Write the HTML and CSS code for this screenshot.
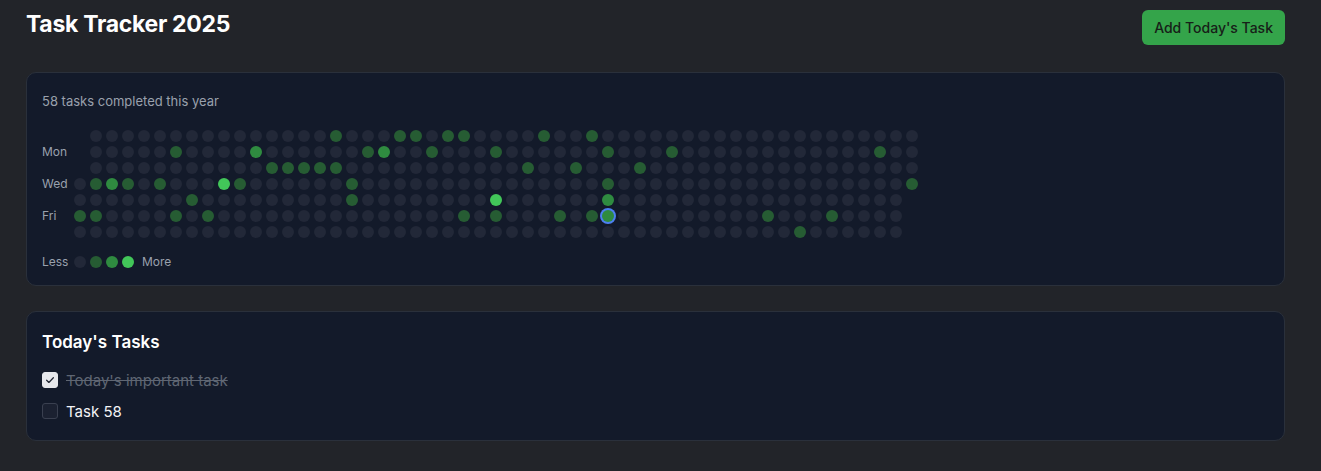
FILE: index.html
```html
<!DOCTYPE html>
<html lang="en">
<head>
    <meta charset="UTF-8">
    <meta name="viewport" content="width=device-width, initial-scale=1.0">
    <title>Task Tracker 2025</title>
    <link rel="stylesheet" href="styles.css">
</head>
<body>
    <div class="tracker">
        <header class="tracker__header">
            <h1 class="tracker__title">Task Tracker 2025</h1>
            <button class="tracker__add-btn">Add Today's Task</button>
        </header>

        <section class="tracker__card tracker__card--heatmap">
            <p class="heatmap__summary">58 tasks completed this year</p>

            <div class="heatmap">
                <div class="heatmap__labels">
                    <span></span>
                    <span>Mon</span>
                    <span></span>
                    <span>Wed</span>
                    <span></span>
                    <span>Fri</span>
                    <span></span>
                </div>
                <div class="heatmap__grid" id="heatmap-grid"></div>
            </div>

            <div class="heatmap__legend">
                <span class="heatmap__legend-text">Less</span>
                <span class="heatmap__dot"></span>
                <span class="heatmap__dot heatmap__dot--l1"></span>
                <span class="heatmap__dot heatmap__dot--l2"></span>
                <span class="heatmap__dot heatmap__dot--l3"></span>
                <span class="heatmap__legend-text heatmap__legend-text--more">More</span>
            </div>
        </section>

        <section class="tracker__card tracker__card--tasks">
            <h2 class="tasks__title">Today's Tasks</h2>
            <ul class="tasks__list">
                <li class="tasks__item tasks__item--done">
                    <span class="tasks__check tasks__check--on">
                        <svg viewBox="0 0 16 16" width="12" height="12"><path d="M3.5 8.3l3 3 6-6.3" fill="none" stroke="#1f2430" stroke-width="1.6" stroke-linecap="round" stroke-linejoin="round"/></svg>
                    </span>
                    <span class="tasks__label">Today's important task</span>
                </li>
                <li class="tasks__item">
                    <span class="tasks__check"></span>
                    <span class="tasks__label">Task 58</span>
                </li>
            </ul>
        </section>
    </div>

    <script>
        // week column, weekday row, level
        const activity = [
            [16,0,1],[20,0,1],[21,0,1],[23,0,1],[24,0,1],[29,0,1],[32,0,1],
            [6,1,1],[11,1,2],[18,1,1],[19,1,2],[22,1,1],[26,1,1],[33,1,1],[37,1,1],[50,1,1],
            [12,2,1],[13,2,1],[14,2,1],[15,2,1],[16,2,1],[28,2,1],[31,2,1],[35,2,1],
            [1,3,1],[2,3,2],[3,3,1],[5,3,1],[9,3,3],[10,3,1],[17,3,1],[33,3,1],[52,3,1],
            [7,4,1],[17,4,1],[26,4,3],[33,4,2],
            [0,5,1],[1,5,1],[6,5,1],[8,5,1],[24,5,1],[26,5,1],[30,5,1],[32,5,1],[33,5,2],[43,5,1],[47,5,1],
            [45,6,1]
        ];
        const today = '33-5';
        const levels = {};
        activity.forEach(([c, r, l]) => { levels[c + '-' + r] = l; });

        const grid = document.getElementById('heatmap-grid');
        const offset = 3; // Jan 1 2025 is a Wednesday

        for (let i = 0; i < offset + 365; i++) {
            const cell = document.createElement('span');
            if (i < offset) {
                cell.className = 'heatmap__dot heatmap__dot--empty';
            } else {
                const key = Math.floor(i / 7) + '-' + (i % 7);
                cell.className = 'heatmap__dot';
                if (levels[key]) cell.classList.add('heatmap__dot--l' + levels[key]);
                if (key === today) cell.classList.add('heatmap__dot--today');
            }
            grid.appendChild(cell);
        }
    </script>
</body>
</html>
```

FILE: styles.css
```css
* {
    box-sizing: border-box;
}

body {
    margin: 0;
    background: #222429;
    color: #f3f4f6;
    font-family: Inter, "Noto Sans", sans-serif;
}

.tracker {
    padding: 10px 36px 30px 26px;
}

.tracker__header {
    display: flex;
    justify-content: space-between;
    align-items: flex-start;
    margin-bottom: 27px;
}

.tracker__title {
    margin: 0;
    font-size: 23px;
    line-height: 28px;
    font-weight: 700;
    letter-spacing: -0.3px;
    color: #ffffff;
}

.tracker__add-btn {
    height: 35px;
    padding: 0 12px;
    background: #34a44a;
    border: none;
    border-radius: 6px;
    color: #172018;
    font-family: inherit;
    font-size: 14px;
    font-weight: 500;
    cursor: pointer;
}

.tracker__card {
    background: #131a2a;
    border: 1px solid #2a303b;
    border-radius: 10px;
    padding: 19px 15px 17px;
}

.tracker__card + .tracker__card {
    margin-top: 25px;
}

.heatmap__summary {
    margin: 0 0 20px;
    font-size: 13px;
    line-height: 18px;
    color: #9aa1ad;
}

.heatmap {
    display: flex;
    gap: 4px;
}

.heatmap__labels {
    display: grid;
    grid-template-rows: repeat(7, 12px);
    row-gap: 4px;
    width: 28px;
    font-size: 12px;
    line-height: 12px;
    color: #9aa1ad;
}

.heatmap__grid {
    display: grid;
    grid-template-rows: repeat(7, 12px);
    grid-auto-flow: column;
    grid-auto-columns: 12px;
    gap: 4px;
}

.heatmap__dot {
    display: inline-block;
    flex-shrink: 0;
    width: 12px;
    height: 12px;
    border-radius: 50%;
    background: #222838;
}

.heatmap__dot--empty {
    visibility: hidden;
}

.heatmap__dot--l1 {
    background: #265c33;
}

.heatmap__dot--l2 {
    background: #2f8b40;
}

.heatmap__dot--l3 {
    background: #42c659;
}

.heatmap__dot--today {
    box-shadow: 0 0 0 2px #4c7ff0;
}

.heatmap__legend {
    display: flex;
    align-items: center;
    gap: 4px;
    margin-top: 18px;
    font-size: 12px;
    line-height: 12px;
    color: #9aa1ad;
}

.heatmap__legend-text {
    width: 28px;
}

.heatmap__legend-text--more {
    width: auto;
    margin-left: 4px;
}

.tasks__title {
    margin: 0 0 15px;
    font-size: 17px;
    line-height: 22px;
    font-weight: 600;
    color: #ffffff;
}

.tasks__list {
    list-style: none;
    margin: 0;
    padding: 0;
    display: flex;
    flex-direction: column;
    gap: 7px;
}

.tasks__item {
    display: flex;
    align-items: center;
    gap: 8px;
    height: 24px;
    font-size: 15px;
    color: #f3f4f6;
}

.tasks__check {
    display: flex;
    align-items: center;
    justify-content: center;
    width: 16px;
    height: 16px;
    border-radius: 3px;
    border: 1px solid #3a4050;
    background: #1b2131;
}

.tasks__check--on {
    background: #e6e7eb;
    border-color: #e6e7eb;
}

.tasks__item--done .tasks__label {
    color: #5f6673;
    text-decoration: line-through;
}
```
